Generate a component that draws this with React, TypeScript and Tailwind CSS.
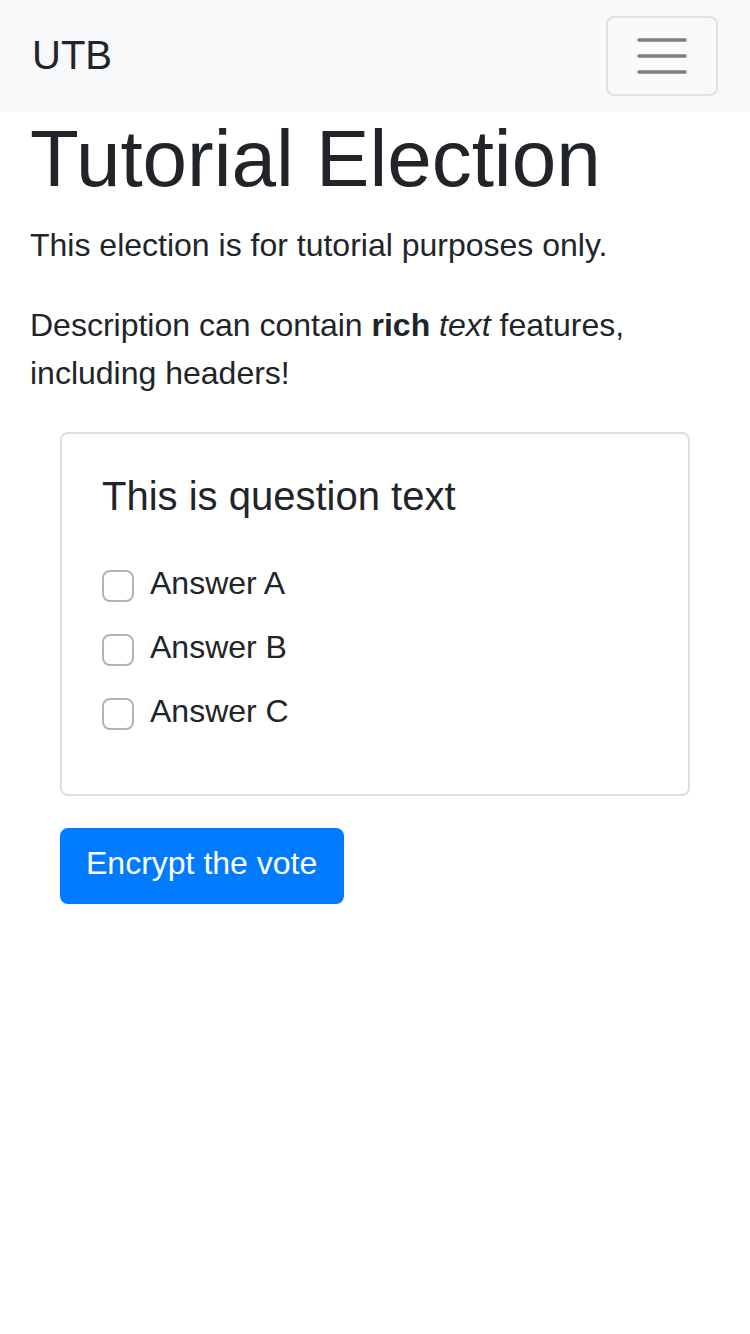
import React from "react";

function Checkbox() {
  return (
    <span className="mt-[11px] block h-[32px] w-[32px] shrink-0 rounded-[8px] border-2 border-[#adb5bd] bg-white" />
  );
}

function Answer({ label }: { label: string }) {
  return (
    <div className="flex items-start">
      <Checkbox />
      <span className="ml-[16px] text-[32px] leading-[48px]">{label}</span>
    </div>
  );
}

export default function App() {
  return (
    <div
      className="min-h-[1334px] w-[750px] bg-white text-[#212529]"
      style={{ fontFamily: '"Liberation Sans", Arial, sans-serif' }}
    >
      <nav className="flex h-[112px] items-center justify-between bg-[#f8f9fa] px-[32px]">
        <span className="mb-[3px] text-[40px] leading-[60px]">UTB</span>
        <button className="flex h-[80px] w-[112px] items-center justify-center rounded-[8px] border-2 border-[#e0e1e2]">
          <svg width="52" height="40" viewBox="0 0 52 40">
            <g stroke="#7f8080" strokeWidth="3.5" strokeLinecap="round">
              <line x1="3" y1="4" x2="49" y2="4" />
              <line x1="3" y1="20" x2="49" y2="20" />
              <line x1="3" y1="36" x2="49" y2="36" />
            </g>
          </svg>
        </button>
      </nav>
      <main className="px-[30px]">
        <h1 className="-mt-[1px] mb-[14px] text-[80px] leading-[96px]">Tutorial Election</h1>
        <p className="mb-[32px] text-[32px] leading-[48px]">
          This election is for tutorial purposes only.
        </p>
        <p className="mb-[35px] text-[32px] leading-[48px]">
          Description can contain <b>rich</b> <i>text</i> features, including headers!
        </p>
        <div className="px-[30px]">
          <div className="rounded-[8px] border-2 border-[#dfdfdf] p-[40px]">
            <h5 className="-mt-[2px] mb-[18px] text-[40px] leading-[48px]">This is question text</h5>
            <div className="flex flex-col gap-[16px] pt-[21px] pb-[19px]">
              <Answer label="Answer A" />
              <Answer label="Answer B" />
              <Answer label="Answer C" />
            </div>
          </div>
          <button className="mt-[32px] rounded-[8px] border-2 border-[#007bff] bg-[#007bff] pt-[9px] pb-[15px] pl-[24px] pr-[25px] text-[32px] leading-[48px] text-white">
            Encrypt the vote
          </button>
        </div>
      </main>
    </div>
  );
}
